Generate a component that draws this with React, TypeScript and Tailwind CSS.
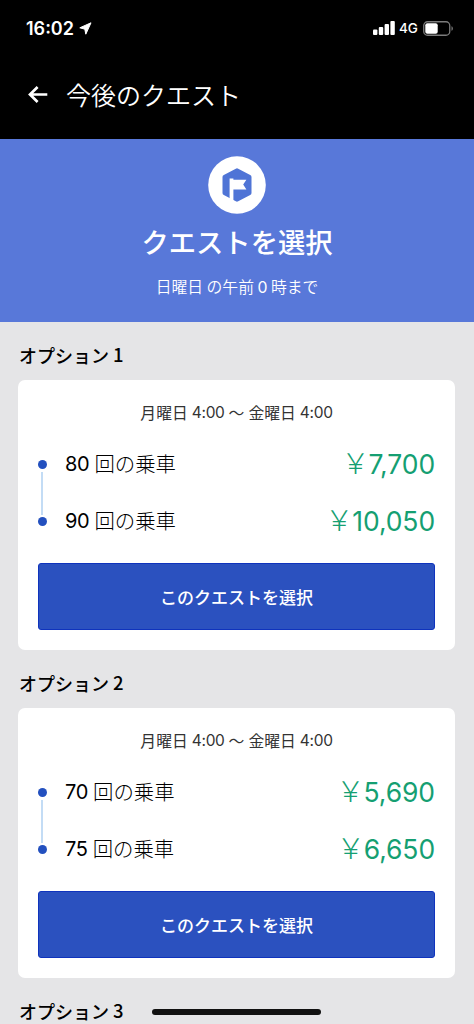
import React from "react";

type Step = {
  rides: number;
  reward: string;
};

type QuestOption = {
  id: number;
  steps: Step[];
};

const options: QuestOption[] = [
  {
    id: 1,
    steps: [
      { rides: 80, reward: "7,700" },
      { rides: 90, reward: "10,050" },
    ],
  },
  {
    id: 2,
    steps: [
      { rides: 70, reward: "5,690" },
      { rides: 75, reward: "6,650" },
    ],
  },
];

const StatusBar: React.FC = () => (
  <div className="flex h-[56px] items-center justify-between pl-[26px] pr-[20px]">
    <div className="flex items-center gap-[5px] pt-[1px]">
      <span className="font-['Inter'] text-[18px] font-semibold leading-none">
        16:02
      </span>
      <svg width="13" height="13" viewBox="0 0 13 13" fill="currentColor" stroke="currentColor" strokeWidth="1" strokeLinejoin="round">
        <path d="M12 .8.8 5.8l5 1.4 1 5z" />
      </svg>
    </div>
    <div className="flex items-center">
      <svg width="22" height="14" viewBox="0 0 22 14" fill="currentColor">
        <rect x="0" y="8.5" width="4.4" height="5.5" rx="1" />
        <rect x="5.8" y="6" width="4.4" height="8" rx="1" />
        <rect x="11.6" y="3" width="4.4" height="11" rx="1" />
        <rect x="17.4" y="0" width="4.4" height="14" rx="1" />
      </svg>
      <span className="ml-[4px] w-[20px] pt-[1px] font-['Inter'] text-[13.5px] font-medium leading-none">
        4G
      </span>
      <svg className="ml-[4px]" width="31" height="15" viewBox="0 0 31 15">
        <rect x=".75" y=".75" width="26" height="13.5" rx="3.8" fill="none" stroke="#7c7c7c" strokeWidth="1.3" />
        <rect x="2.3" y="2.3" width="12.4" height="10.4" rx="2" fill="#fff" />
        <path d="M28.5 5.2c1.8.6 1.8 4 0 4.6z" fill="#7c7c7c" />
      </svg>
    </div>
  </div>
);

const Header: React.FC = () => (
  <header className="h-[139px] bg-black text-white">
    <StatusBar />
    <div className="flex h-[77px] items-center pl-[28px]">
      <svg width="20" height="17" viewBox="0 0 20 17" fill="none" stroke="currentColor" strokeWidth="2.7">
        <path d="M19.3 8.5H2M9.6 1 2 8.5 9.6 16" />
      </svg>
      <h1 className="ml-[18px] text-[25px] font-[350] leading-none">今後のクエスト</h1>
    </div>
  </header>
);

const Hero: React.FC = () => (
  <section className="flex h-[183px] flex-col items-center bg-[#5878d9] pt-[17px] text-white">
    <svg width="58" height="58" viewBox="0 0 58 58">
      <circle cx="29" cy="29" r="28.8" fill="#fff" />
      <path
        d="M27.8 12.7q1.2-.7 2.4 0l12 6.4q1.3.7 1.3 2v15.8q0 1.3-1.3 2l-12 6.4q-1.2.7-2.4 0l-12-6.4q-1.3-.7-1.3-2v-15.8q0-1.3 1.3-2z"
        fill="#4f74d6"
      />
      <path d="M21.6 22.6h3.8v1.2h13l-3.2 4.7 3.2 4.9h-13v12l-3.8-2z" fill="#fff" />
    </svg>
    <h2 className="mt-[13px] text-[27.3px] font-medium leading-[28px]">クエストを選択</h2>
    <p className="mt-[24px] whitespace-pre text-[15.8px] font-[350] leading-[16px]">
      日曜日 の午前 <span className="font-['Inter'] font-normal">0</span> 時まで
    </p>
  </section>
);

const OptionTitle: React.FC<{ id: number }> = ({ id }) => (
  <h3 className="ml-[19px] flex h-[58px] items-center gap-[4px] pt-[7px] text-[18px] font-medium leading-none text-black">
    <span>オプション</span>
    <span className="text-[18.5px]">{id}</span>
  </h3>
);

const OptionCard: React.FC<{ steps: Step[] }> = ({ steps }) => (
  <div className="ml-[18px] h-[270px] w-[437px] rounded-[7px] bg-white px-[20px] pt-[25px]">
    <p className="flex items-center justify-center gap-[4px] text-[15.8px] leading-[16px] text-[#333]">
      <span>月曜日</span>
      <span className="font-['Inter'] text-[15.5px] tracking-[-0.3px]">4:00</span>
      <span>〜</span>
      <span>金曜日</span>
      <span className="font-['Inter'] text-[15.5px] tracking-[-0.3px]">4:00</span>
    </p>

    <div className="relative mt-[15px]">
      {/* Line between the two dots */}
      <div className="absolute left-[3px] top-[36px] h-[43px] w-[2px] bg-[#c3dcf5]" />
      {steps.map((step) => (
        <div key={step.rides} className="flex h-[57px] items-center">
          <span className="h-[9px] w-[9px] rounded-full bg-[#2350bf]" />
          <span className="ml-[18px] flex items-center gap-[5px] pb-[2px] leading-none text-black">
            <span className="pt-[1px] font-['Inter'] text-[20px] tracking-[-0.3px]">{step.rides}</span>
            <span className="text-[20.4px] font-light">回の乗車</span>
          </span>
          <span className="ml-auto flex items-center leading-none text-[#159f72]">
            <span className="-mr-px pb-[5px] text-[28px] font-light">￥</span>
            <span className="font-['Inter'] text-[26.5px] tracking-[-0.1px]">{step.reward}</span>
          </span>
        </div>
      ))}
    </div>

    <button className="mt-[13px] flex h-[67px] w-full items-center justify-center rounded-[3px] border border-[#0f33bd] bg-[#2b51bf] text-[17px] font-medium leading-none text-white">
      このクエストを選択
    </button>
  </div>
);

const App: React.FC = () => {
  return (
    <div
      lang="ja"
      className="relative h-[1024px] w-[474px] overflow-hidden bg-[#e5e5e7] font-['Noto_Sans_CJK_JP',sans-serif]"
    >
      <Header />
      <Hero />
      {options.map((option) => (
        <section key={option.id}>
          <OptionTitle id={option.id} />
          <OptionCard steps={option.steps} />
        </section>
      ))}
      <OptionTitle id={3} />

      {/* Home indicator */}
      <div className="absolute bottom-[9px] left-[152px] h-[6px] w-[169px] rounded-full bg-[#111]" />
    </div>
  );
};

export default App;
